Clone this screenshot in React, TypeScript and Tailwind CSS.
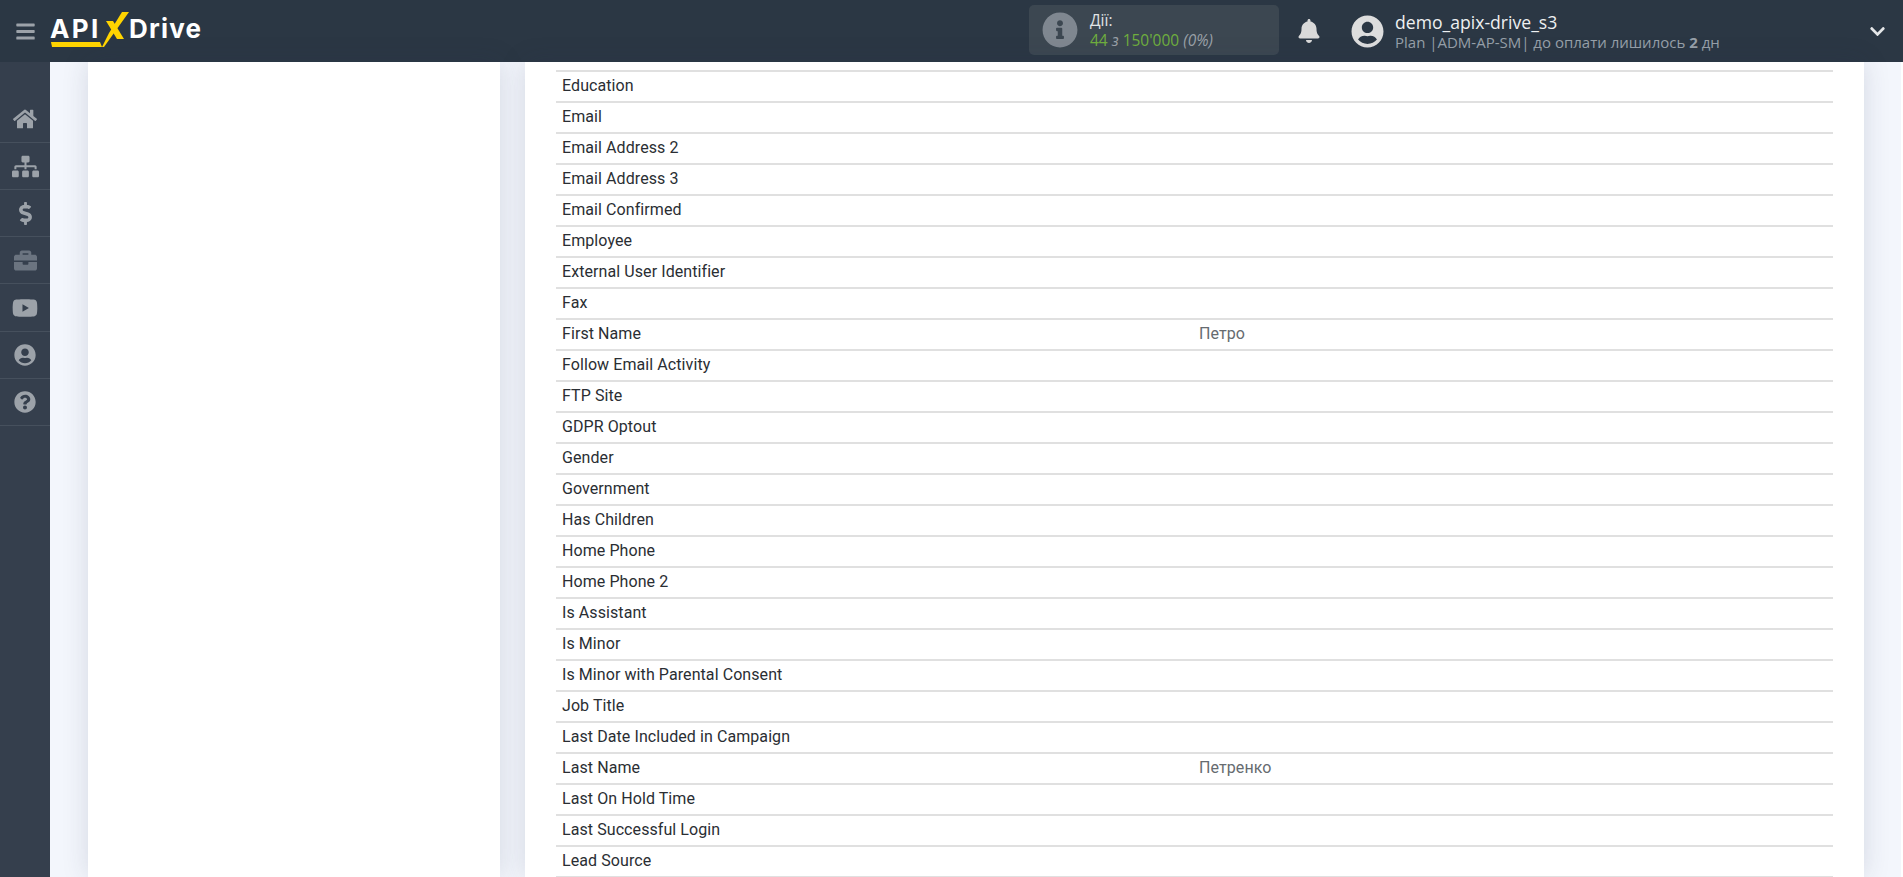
import React from "react";
import { FaHome, FaSitemap, FaDollarSign, FaBriefcase, FaYoutube, FaUserCircle, FaQuestionCircle, FaBell, FaInfoCircle, FaChevronDown, FaBars } from "react-icons/fa";

const rows: [string, string?][] = [
  ["Education"], ["Email"], ["Email Address 2"], ["Email Address 3"], ["Email Confirmed"], ["Employee"],
  ["External User Identifier"], ["Fax"], ["First Name", "Петро"], ["Follow Email Activity"], ["FTP Site"],
  ["GDPR Optout"], ["Gender"], ["Government"], ["Has Children"], ["Home Phone"], ["Home Phone 2"],
  ["Is Assistant"], ["Is Minor"], ["Is Minor with Parental Consent"], ["Job Title"],
  ["Last Date Included in Campaign"], ["Last Name", "Петренко"], ["Last On Hold Time"],
  ["Last Successful Login"], ["Lead Source"],
];

const navIcons = [
  { I: FaHome, c: "text-[#9ca2a9]", s: "text-[24px]", h: "h-[47px]" },
  { I: FaSitemap, c: "text-[#9ca2a9]", s: "text-[27px]", h: "h-[47px]" },
  { I: FaDollarSign, c: "text-[#9ca2a9]", s: "text-[23px]", h: "h-[47px]" },
  { I: FaBriefcase, c: "text-[#6b7480]", s: "text-[23px]", h: "h-[47px]" },
  { I: FaYoutube, c: "text-[#9ca2a9]", s: "text-[26px]", h: "h-[48px]" },
  { I: FaUserCircle, c: "text-[#9ca2a9]", s: "text-[22px]", h: "h-[47px]" },
  { I: FaQuestionCircle, c: "text-[#9ca2a9]", s: "text-[22px]", h: "h-[47px]" },
];

function Logo() {
  return (
    <div className="relative h-[40px] w-[155px] font-['Inter',sans-serif] text-[26px] font-bold leading-[26px] text-white">
      <span className="absolute left-[0px] top-[5px] tracking-[2.4px]">API</span>
      <span className="absolute left-[79px] top-[5px] tracking-[1.2px]">Drive</span>
      <svg className="absolute left-0 top-0" width="155" height="40" viewBox="0 0 155 40">
        <path d="M1 31 L50 31 L52 36 L2 36 Z" fill="#ffd400" />
        <path d="M72 1 L79 1 L54 36 L52 36 L59 22 Z" fill="#ffd400" />
        <path d="M56 10 L63 10 L74 28 L67 28 Z" fill="#ffd400" />
      </svg>
    </div>
  );
}

export default function App() {
  return (
    <div className="flex h-[877px] w-[1903px] flex-col overflow-hidden bg-white font-['Roboto',sans-serif]">
      <header className="flex h-[62px] shrink-0 items-center bg-[#2b3744]">
        <div className="flex w-[50px] justify-center">
          <FaBars className="text-[21px] text-[#9ca2a9]" />
        </div>
        <Logo />
        <div className="ml-[824px] mb-[2px] flex h-[50px] w-[250px] items-center rounded-[5px] bg-[#3c4751] pl-[13px]">
          <FaInfoCircle className="text-[36px] text-[#7f8790]" />
          <div className="ml-[12px] font-['Open_Sans',sans-serif] text-[15.5px] leading-[20px]">
            <div className="text-[#e1e4e6]">Дії:</div>
            <div className="text-[#6fae3e]">
              44 <i className="text-[#9aa1a8]">з</i> 150'000 <i className="text-[#9aa1a8]">(0%)</i>
            </div>
          </div>
        </div>
        <FaBell className="ml-[18px] text-[24px] text-[#d9d9d9]" />
        <FaUserCircle className="ml-[30px] text-[33px] text-[#dddddd]" />
        <div className="ml-[11px] pt-[1px] font-['Open_Sans',sans-serif]">
          <div className="text-[17.6px] leading-[22px] text-[#eef0f1]">demo_apix-drive_s3</div>
          <div className="text-[15px] leading-[19px] text-[#97a0a9]">
            Plan |ADM-AP-SM| до оплати лишилось <b>2</b> дн
          </div>
        </div>
        <FaChevronDown className="ml-auto mr-[17px] text-[17px] text-[#e5e7e9]" />
      </header>
      <div className="flex min-h-0 flex-1">
        <nav className="flex w-[50px] shrink-0 flex-col bg-[#353f4d] pt-[34px]">
          {navIcons.map(({ I, c, s, h }, i) => (
            <div key={i} className={`flex ${h} items-center justify-center border-b border-[#46505d]`}>
              <I className={`${c} ${s}`} />
            </div>
          ))}
        </nav>
        <main className="mr-[2px] flex min-w-0 flex-1 bg-[#f3f6fc]">
          <div className="ml-[38px] w-[412px] shrink-0 bg-white shadow-[0_0_25px_rgba(40,50,80,0.15)]" />
          <div className="ml-[25px] w-[1339px] shrink-0 bg-white px-[31px] pt-[8px] shadow-[0_0_25px_rgba(40,50,80,0.15)]">
            <div className="border-t-2 border-[#e0e0e0]">
              {rows.map(([k, v]) => (
                <div key={k} className="flex h-[31px] items-center border-b-2 border-[#e0e0e0] pb-[1px] pl-[6px] text-[16px] tracking-[0.08px] text-[#2a2e33]">
                  <span className="w-[637px] shrink-0">{k}</span>
                  {v && <span className="text-[#666b70]">{v}</span>}
                </div>
              ))}
            </div>
          </div>
        </main>
      </div>
    </div>
  );
}
